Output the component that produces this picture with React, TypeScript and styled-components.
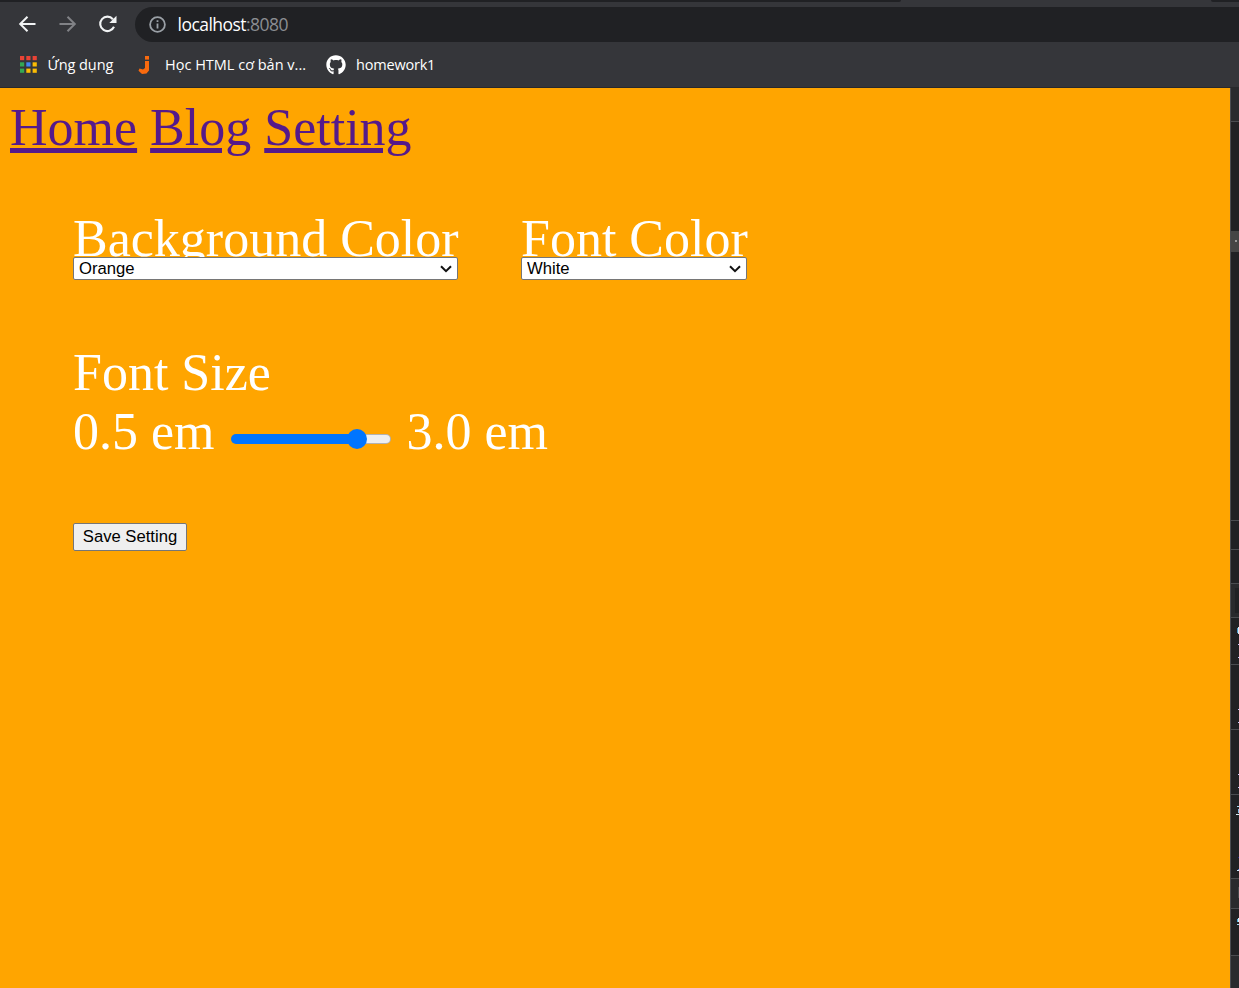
import React from "react";
import styled, { createGlobalStyle } from "styled-components";
import { FaGithub } from "react-icons/fa";

const GlobalStyle = createGlobalStyle`
  * { box-sizing: border-box; }
  body { margin: 0; background: #35363a; overflow: hidden; }
`;

const Window = styled.div`
  width: 1239px;
  height: 988px;
  display: flex;
  flex-direction: column;
  overflow: hidden;
  font-family: "Open Sans", "Noto Sans", sans-serif;
`;

const TabEdge = styled.div`
  height: 2px;
  flex: none;
  display: flex;
  justify-content: space-between;
  background: #35363a;
`;

const TabStrip = styled.div<{ $width: number; $side: "left" | "right" }>`
  width: ${(p) => p.$width}px;
  background: #202124;
  border-radius: ${(p) => (p.$side === "left" ? "0 0 4px 0" : "0 0 0 4px")};
`;

const Toolbar = styled.div`
  height: 45px;
  flex: none;
  display: flex;
  align-items: center;
  padding: 0 0 0 17px;
  background: #35363a;
`;

const NavButton = styled.button<{ $dim?: boolean }>`
  width: 20px;
  height: 20px;
  margin: 0 20px 2px 0;
  padding: 0;
  border: 0;
  background: none;
  color: ${(p) => (p.$dim ? "#818286" : "#f1f3f4")};
  svg { display: block; }
`;

const AddressBar = styled.div`
  flex: 1;
  height: 35px;
  margin-left: -2px;
  padding-left: 14px;
  display: flex;
  align-items: center;
  border-radius: 18px 0 0 18px;
  background: #202124;
  color: #9aa0a6;
`;

const Url = styled.span`
  margin: 0 0 2px 11.5px;
  font-size: 17.5px;
  line-height: 24px;
  letter-spacing: -0.53px;
  color: #8b8e92;
`;

const Host = styled.span`
  color: #fff;
`;

const Bookmarks = styled.div`
  height: 41px;
  flex: none;
  display: flex;
  align-items: center;
  padding: 0 0 5px 20px;
  border-bottom: 1px solid #28292c;
  background: #35363a;
`;

const Bookmark = styled.div<{ $width: number }>`
  width: ${(p) => p.$width}px;
  display: flex;
  align-items: center;
  flex: none;
`;

const BookmarkText = styled.span<{ $gap: number; $spacing: number }>`
  margin-left: ${(p) => p.$gap}px;
  font-size: 14.5px;
  line-height: 20px;
  letter-spacing: ${(p) => p.$spacing}px;
  color: #fff;
  white-space: nowrap;
`;

const Content = styled.div`
  flex: 1;
  display: flex;
  min-height: 0;
`;

const Page = styled.main`
  flex: 1;
  background: #ffa500;
  color: #fff;
  font: 52px "Liberation Serif", serif;
  padding: 10px;
`;

const Menu = styled.nav`
  line-height: 60px;
  height: 60px;
  white-space: nowrap;
`;

const MenuLink = styled.a`
  color: #551a8b;
  text-decoration: underline;
  text-decoration-thickness: 5px;
  text-underline-offset: 3px;
`;

const Form = styled.form`
  padding: 62px 0 0 63px;
`;

const ColorRow = styled.div`
  display: flex;
  gap: 63px;
`;

const Field = styled.label`
  display: flex;
  flex-direction: column;
`;

const FieldName = styled.span<{ $width: number }>`
  width: ${(p) => p.$width}px;
  line-height: 37px;
  white-space: nowrap;
`;

const SelectBox = styled.span`
  display: grid;
  align-items: center;
  > * { grid-area: 1 / 1; }
  svg { justify-self: end; margin-right: 5px; pointer-events: none; }
`;

const Select = styled.select`
  appearance: none;
  width: 100%;
  height: 23px;
  padding: 0 5px;
  border: 1px solid #767676;
  border-radius: 2px;
  background: #fff;
  color: #000;
  font: 16.67px "Liberation Sans", sans-serif;
`;

const SizeGroup = styled.div`
  margin-top: 63px;
  line-height: 59px;
`;

const SizeRow = styled.div`
  display: flex;
  align-items: center;
  height: 59px;
`;

const Range = styled.input`
  appearance: none;
  width: 160px;
  height: 20px;
  margin: 15px 16px 0 16px;
  background: none;
  &::-webkit-slider-runnable-track {
    height: 10px;
    border: 1px solid transparent;
    border-radius: 5px;
    background:
      linear-gradient(90deg, #0075ff 80%, #efefef 80%) padding-box,
      linear-gradient(90deg, #0075ff 80%, #b2b2b2 80%) border-box;
  }
  &::-webkit-slider-thumb {
    appearance: none;
    width: 20px;
    height: 20px;
    margin-top: -6px;
    border-radius: 50%;
    background: #0075ff;
  }
`;

const SaveButton = styled.button`
  display: block;
  width: 114px;
  height: 28px;
  margin-top: 62px;
  padding: 0;
  border: 1px solid #767676;
  border-radius: 2px;
  background: #efefef;
  color: #000;
  font: 16.67px "Liberation Sans", sans-serif;
`;

const SidePanel = styled.aside`
  width: 9px;
  flex: none;
  overflow: hidden;
  border-left: 1px solid #4a4c50;
  background: #202124;
`;

const PanelRow = styled.div<{ $height: number; $tone?: string; $line?: boolean }>`
  height: ${(p) => p.$height}px;
  overflow: hidden;
  background: ${(p) => p.$tone ?? "#202124"};
  border-bottom: ${(p) => (p.$line === false ? "0" : "1px solid #4a4c50")};
  svg { display: block; }
`;

type Mark = [x: number, y: number, width: number, height: number, color: string];

function Marks({ items }: { items: Mark[] }) {
  return (
    <svg width="8" height="84" viewBox="0 0 8 84">
      {items.map(([x, y, w, h, c], i) => (
        <rect key={i} x={x} y={y} width={w} height={h} fill={c} />
      ))}
    </svg>
  );
}

function Chevron() {
  return (
    <svg width="14" height="10" viewBox="0 0 14 10" fill="none" stroke="#111" strokeWidth="2">
      <path d="M2 2.2 7 7.2 12 2.2" />
    </svg>
  );
}

const appColors = ["#ea4335", "#ea4335", "#ea4335", "#34a853", "#4285f4", "#fbbc04", "#34a853", "#fbbc04", "#fbbc04"];

export default function App() {
  return (
    <Window>
      <GlobalStyle />
      <TabEdge>
        <TabStrip $width={901} $side="left" />
        <TabStrip $width={28} $side="right" />
      </TabEdge>
      <Toolbar>
        <NavButton aria-label="Back">
          <svg width="20" height="20" viewBox="0 0 20 20" fill="none" stroke="currentColor" strokeWidth="2">
            <path d="M18.5 10H3.5M10.5 2.7 3.2 10l7.3 7.3" />
          </svg>
        </NavButton>
        <NavButton aria-label="Forward" $dim>
          <svg width="20" height="20" viewBox="0 0 20 20" fill="none" stroke="currentColor" strokeWidth="2">
            <path d="M2.5 10h15M10.5 2.7l7.3 7.3-7.3 7.3" />
          </svg>
        </NavButton>
        <NavButton aria-label="Reload">
          <svg width="20" height="20" viewBox="0 0 20 20" fill="none" stroke="currentColor" strokeWidth="2.1">
            <path d="M17 12.8A7.2 7.2 0 1 1 15.9 5.2" />
            <path d="M19.5 1.8V9h-7.2z" fill="currentColor" stroke="none" />
          </svg>
        </NavButton>
        <AddressBar>
          <svg width="17" height="17" viewBox="0 0 17 17" fill="none" stroke="currentColor" strokeWidth="1.8">
            <circle cx="8.5" cy="8.5" r="7.4" />
            <path d="M8.5 7.6v5M8.5 4.3v1.8" />
          </svg>
          <Url><Host>localhost</Host>:8080</Url>
        </AddressBar>
      </Toolbar>
      <Bookmarks>
        <Bookmark $width={118}>
          <svg width="17" height="17" viewBox="0 0 17 17">
            {appColors.map((c, i) => (
              <rect key={i} x={(i % 3) * 6.3} y={Math.floor(i / 3) * 6.3} width="4.2" height="4.2" fill={c} />
            ))}
          </svg>
          <BookmarkText $gap={10.5} $spacing={-0.05}>Ứng dụng</BookmarkText>
        </Bookmark>
        <Bookmark $width={188}>
          <svg width="12" height="18" viewBox="0 0 12 18" fill="#f96a0e">
            <rect x="7" y="0" width="4" height="3.6" />
            <path d="M7 5h4v9.5L8.5 17.5 4 18 0.5 14.8 1.5 12.5 5 13.5 7 12z" />
          </svg>
          <BookmarkText $gap={15} $spacing={0}>Học HTML cơ bản v...</BookmarkText>
        </Bookmark>
        <Bookmark $width={120}>
          <FaGithub size={20} color="#fff" />
          <BookmarkText $gap={10} $spacing={-0.2}>homework1</BookmarkText>
        </Bookmark>
      </Bookmarks>
      <Content>
        <Page>
          <Menu>
            <MenuLink>Home</MenuLink> <MenuLink>Blog</MenuLink> <MenuLink>Setting</MenuLink>
          </Menu>
          <Form>
            <ColorRow>
              <Field>
                <FieldName $width={385}>Background Color</FieldName>
                <SelectBox>
                  <Select defaultValue="Orange"><option>Orange</option></Select>
                  <Chevron />
                </SelectBox>
              </Field>
              <Field>
                <FieldName $width={226}>Font Color</FieldName>
                <SelectBox>
                  <Select defaultValue="White"><option>White</option></Select>
                  <Chevron />
                </SelectBox>
              </Field>
            </ColorRow>
            <SizeGroup>
              <div>Font Size</div>
              <SizeRow>
                <span>0.5 em</span>
                <Range type="range" min="0.5" max="3" step="0.1" defaultValue="2.6" />
                <span>3.0 em</span>
              </SizeRow>
            </SizeGroup>
            <SaveButton type="button">Save Setting</SaveButton>
          </Form>
        </Page>
        <SidePanel>
          <PanelRow $height={34} $tone="#292a2d" />
          <PanelRow $height={109} $line={false} />
          <PanelRow $height={21} $tone="#454545" $line={false}>
            <Marks items={[[4, 9, 2, 2, "#9a9a9a"]]} />
          </PanelRow>
          <PanelRow $height={269} />
          <PanelRow $height={29} />
          <PanelRow $height={34} />
          <PanelRow $height={34} $tone="#292a2d">
            <Marks items={[[4, 4, 4, 25, "#202124"]]} />
          </PanelRow>
          <PanelRow $height={47}>
            <Marks items={[[6, 10, 1, 5, "#4f9fd0"], [7, 9, 1, 7, "#dfeaf0"], [7, 26, 1, 1, "#c8c8ff"], [7, 39, 1, 1, "#c8c8ff"]]} />
          </PanelRow>
          <PanelRow $height={65}>
            <Marks items={[[7, 44, 1, 1, "#c8c8ff"], [7, 57, 1, 1, "#c8c8ff"]]} />
          </PanelRow>
          <PanelRow $height={65}>
            <Marks items={[[7, 44, 1, 1, "#c8c8ff"], [7, 57, 1, 1, "#c8c8ff"]]} />
          </PanelRow>
          <PanelRow $height={84}>
            <Marks items={[[6, 11, 2, 1, "#a8dcf5"], [7, 14, 1, 4, "#7fb9e6"], [5, 19, 3, 1, "#d5eef5"], [7, 62, 1, 1, "#28288a"], [7, 74, 1, 1, "#4a7ad0"], [6, 75, 2, 1, "#cfe8ff"]]} />
          </PanelRow>
          <PanelRow $height={30} $tone="#292a2d">
            <Marks items={[[7, 8, 1, 11, "#45474b"]]} />
          </PanelRow>
          <PanelRow $height={47}>
            <Marks items={[[6, 10, 1, 3, "#4fb0e0"], [7, 9, 1, 4, "#d5eef5"], [6, 15, 2, 1, "#a8dcf5"]]} />
          </PanelRow>
          <PanelRow $height={33} $tone="#292a2d" $line={false} />
        </SidePanel>
      </Content>
    </Window>
  );
}
